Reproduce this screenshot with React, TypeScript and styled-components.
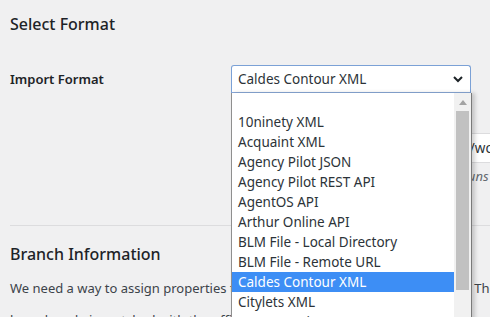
import React from "react";
import styled, { createGlobalStyle } from "styled-components";

const formats = [
  "10ninety XML",
  "Acquaint XML",
  "Agency Pilot JSON",
  "Agency Pilot REST API",
  "AgentOS API",
  "Arthur Online API",
  "BLM File - Local Directory",
  "BLM File - Remote URL",
  "Caldes Contour XML",
  "Citylets XML",
  "Dezrez Rezi JSON",
];

const selected = "Caldes Contour XML";

const GlobalStyle = createGlobalStyle`
  html, body {
    margin: 0;
    background: #f0f0f1;
    overflow: hidden;
  }
  body {
    font-family: "Noto Sans", "Open Sans", sans-serif;
    color: #1d2327;
  }
`;

const Page = styled.div`
  position: relative;
  width: 490px;
  height: 317px;
  overflow: hidden;
  padding-left: 10px;
  box-sizing: border-box;
`;

const Heading = styled.h2`
  margin: 0;
  font-size: 16px;
  font-weight: 500;
  line-height: 24px;
  color: #1d2327;
`;

const FirstHeading = styled(Heading)`
  padding-top: 12px;
`;

const Row = styled.div<{ $gap: number }>`
  display: grid;
  grid-template-columns: 221px 1fr;
  align-items: center;
  margin-top: ${(p) => p.$gap}px;
`;

const Label = styled.div`
  font-size: 13px;
  font-weight: 600;
`;

const SelectBox = styled.div`
  width: 240px;
  height: 28px;
  box-sizing: border-box;
  border: 1px solid #7ba1d6;
  border-bottom-color: #8aa9d8;
  border-radius: 3px 3px 0 0;
  background: #fff;
  display: flex;
  align-items: center;
  justify-content: space-between;
  padding: 0 6px;
  font-size: 13.5px;
  color: #2c3338;
`;

const Chevron = styled.svg`
  width: 12px;
  height: 12px;
`;

const UrlInput = styled.div`
  width: 420px;
  height: 30px;
  box-sizing: border-box;
  border: 1px solid #dcdcde;
  border-right: none;
  background: #fff;
  font-size: 13.5px;
  line-height: 28px;
  padding-left: 8px;
  white-space: nowrap;
  overflow: hidden;
  color: #2c3338;
`;

const Description = styled.p`
  margin: 4px 0 0;
  font-size: 13px;
  font-style: italic;
  color: #646970;
  white-space: nowrap;
`;

const Rule = styled.hr`
  border: none;
  border-top: 1px solid #dcdcde;
  margin: 40px 0 0;
`;

const BranchHeading = styled(Heading)`
  margin-top: 16px;
`;

const Paragraph = styled.p`
  margin: 6px 0 0;
  font-size: 13px;
  line-height: 32px;
  width: 520px;
  color: #3c434a;
`;

const Dropdown = styled.div`
  position: absolute;
  left: 231px;
  top: 93px;
  width: 241px;
  height: 240px;
  box-sizing: border-box;
  background: #fff;
  border-left: 1px solid #8f8f8f;
  border-right: 1px solid #7a7a7a;
  box-shadow: 3px 0 4px rgba(0, 0, 0, 0.18);
  display: flex;
`;

const OptionList = styled.ul`
  list-style: none;
  margin: 0;
  padding: 0;
  flex: 1;
  min-width: 0;
`;

const Option = styled.li<{ $active?: boolean }>`
  height: 20px;
  line-height: 20px;
  padding-left: 6px;
  font-size: 13.5px;
  white-space: nowrap;
  color: ${(p) => (p.$active ? "#fff" : "#2c3338")};
  background: ${(p) => (p.$active ? "#3d8ef5" : "transparent")};
`;

const EmptyOption = styled.li`
  height: 19px;
`;

const Scrollbar = styled.div`
  width: 17px;
  background: #f1f1f1;
  display: flex;
  flex-direction: column;
  align-items: center;
`;

const ArrowUp = styled.div`
  margin-top: 7px;
  width: 0;
  height: 0;
  border-left: 4px solid transparent;
  border-right: 4px solid transparent;
  border-bottom: 5px solid #a3a3a3;
`;

const Thumb = styled.div`
  margin-top: 6px;
  width: 13px;
  height: 179px;
  background: #c1c1c1;
`;

export default function App() {
  return (
    <>
      <GlobalStyle />
      <Page>
        <FirstHeading>Select Format</FirstHeading>
        <Row $gap={29}>
          <Label>Import Format</Label>
          <SelectBox>
            <span>{selected}</span>
            <Chevron viewBox="0 0 12 12">
              <path d="M2 4 L6 8 L10 4" fill="none" stroke="#1d2327" strokeWidth="2" />
            </Chevron>
          </SelectBox>
        </Row>
        <Row $gap={40}>
          <div />
          <div>
            <UrlInput>https://www.yourestateagents.co.uk/wordpress/feed.blm</UrlInput>
            <Description>This is the location of the file the import runs</Description>
          </div>
        </Row>
        <Rule />
        <BranchHeading>Branch Information</BranchHeading>
        <Paragraph>
          We need a way to assign properties to their relevant branches in the plugin.
          The branch code is matched with the office name and code provided in the feed.
        </Paragraph>
        <Dropdown>
          <OptionList>
            <EmptyOption />
            {formats.map((f) => (
              <Option key={f} $active={f === selected}>
                {f}
              </Option>
            ))}
          </OptionList>
          <Scrollbar>
            <ArrowUp />
            <Thumb />
          </Scrollbar>
        </Dropdown>
      </Page>
    </>
  );
}
